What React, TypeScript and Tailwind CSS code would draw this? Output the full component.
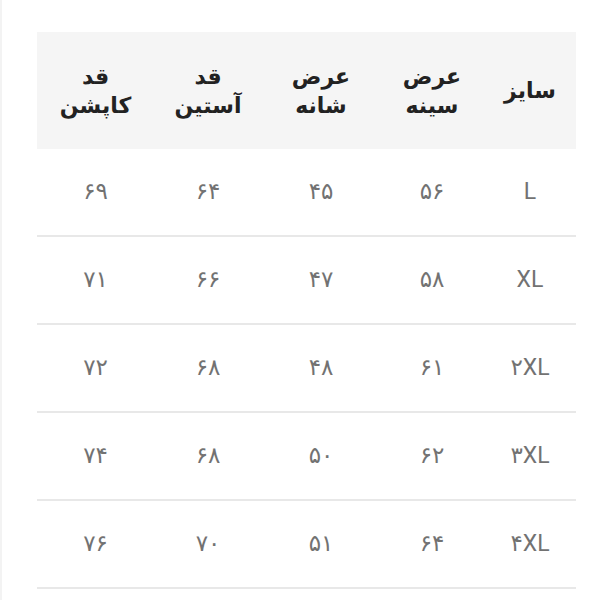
const headers: string[][] = [
  ["سایز"],
  ["عرض", "سینه"],
  ["عرض", "شانه"],
  ["قد", "آستین"],
  ["قد", "کاپشن"],
];

const rows: string[][] = [
  ["L", "۵۶", "۴۵", "۶۴", "۶۹"],
  ["XL", "۵۸", "۴۷", "۶۶", "۷۱"],
  ["۲XL", "۶۱", "۴۸", "۶۸", "۷۲"],
  ["۳XL", "۶۲", "۵۰", "۶۸", "۷۴"],
  ["۴XL", "۶۴", "۵۱", "۷۰", "۷۶"],
];

const cols = "grid grid-cols-[92px_104px_118px_108px_117px]";

export default function App() {
  return (
    <div className="w-[600px] h-[600px] bg-white border-l-2 border-[#f3f3f3] pt-[32px] pl-[35px] font-['DejaVu_Sans',sans-serif]">
      <div dir="rtl" className="w-[539px]">
        {/* header */}
        <div className={`${cols} bg-[#f5f5f5] h-[117px]`}>
          {headers.map((h, i) => (
            <div
              key={i}
              className="flex flex-col items-center justify-center text-[22px] leading-[29px] font-bold text-[#222]"
            >
              {h.map((t) => (
                <span key={t}>{t}</span>
              ))}
            </div>
          ))}
        </div>

        {/* rows */}
        {rows.map((r, i) => (
          <div key={i} className={`${cols} h-[88px] border-b-2 border-[#e8e8e8]`}>
            {r.map((v, j) => (
              <div
                key={j}
                className="flex items-center justify-center text-[23px] font-normal text-[#727272] font-['Roboto','DejaVu_Sans',sans-serif]"
              >
                {v}
              </div>
            ))}
          </div>
        ))}
      </div>
    </div>
  );
}
